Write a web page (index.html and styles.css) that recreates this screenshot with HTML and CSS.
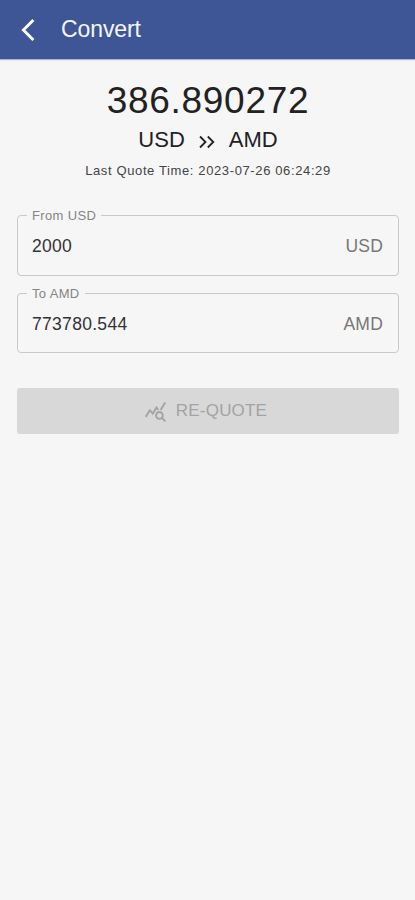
FILE: index.html
```html
<!DOCTYPE html>
<html lang="en">
<head>
  <meta charset="UTF-8" />
  <meta name="viewport" content="width=device-width, initial-scale=1.0" />
  <title>Convert</title>
  <link rel="stylesheet" href="styles.css">
</head>
<body>
  <header class="app-bar">
    <svg class="back" viewBox="0 0 14 24" aria-label="Back">
      <path d="M12.4 2 L2.4 12 L12.4 22" />
    </svg>
    <h1>Convert</h1>
  </header>

  <main class="container">
    <div class="quote">
      <div class="rate">386.890272</div>
      <div class="pair">
        <span>USD</span>
        <svg class="arrows" viewBox="0 0 16 14">
          <path d="M1 1.5 L6.5 7 L1 12.5 M8.8 1.5 L14.3 7 L8.8 12.5" />
        </svg>
        <span>AMD</span>
      </div>
      <div class="time">Last Quote Time: 2023-07-26 06:24:29</div>
    </div>

    <fieldset class="field">
      <legend>From USD</legend>
      <div class="field-row">
        <span class="value">2000</span>
        <span class="currency">USD</span>
      </div>
    </fieldset>

    <fieldset class="field">
      <legend>To AMD</legend>
      <div class="field-row">
        <span class="value">773780.544</span>
        <span class="currency">AMD</span>
      </div>
    </fieldset>

    <button class="requote" type="button" disabled>
      <svg viewBox="0 0 24 24">
        <path d="M19.88 18.47c.44-.7.7-1.51.7-2.39 0-2.49-2.01-4.5-4.5-4.5s-4.5 2.01-4.5 4.5 2.01 4.5 4.49 4.5c.88 0 1.7-.26 2.39-.7L21.58 23 23 21.58l-3.12-3.11zm-3.8.11c-1.38 0-2.5-1.12-2.5-2.5s1.12-2.5 2.5-2.5 2.5 1.12 2.5 2.5-1.12 2.5-2.5 2.5zm-.36-8.5c-.74.02-1.45.18-2.1.45l-.55-.83-3.8 6.18-3.01-3.52-3.63 5.81L1 17l5-8 3 3.5L13 6l2.72 4.08zm2.59.5c-.64-.28-1.33-.45-2.05-.49L21.38 2 23 3.18l-4.69 7.4z" />
      </svg>
      <span>RE-QUOTE</span>
    </button>
  </main>
</body>
</html>
```
FILE: styles.css
```css
* {
  box-sizing: border-box;
  margin: 0;
  padding: 0;
  font-family: "Liberation Sans", Arial, sans-serif;
}

body {
  min-height: 100vh;
  background: #f6f6f6;
  color: #222;
}

.app-bar {
  display: flex;
  align-items: center;
  height: 59px;
  padding-left: 21px;
  background: #3e5695;
  color: #f4f6fb;
  box-shadow: 0 1px 1px #aab3cd;
}

.back {
  width: 14px;
  height: 24px;
  margin-right: 26px;
  fill: none;
  stroke: #fff;
  stroke-width: 2.9;
}

h1 {
  font-size: 23px;
  font-weight: normal;
  letter-spacing: -0.1px;
}

.container {
  padding: 22px 16px 0 17px;
}

.quote {
  text-align: center;
}

.rate {
  font-size: 37px;
  line-height: 40px;
  letter-spacing: 0.7px;
}

.pair {
  display: flex;
  justify-content: center;
  align-items: center;
  gap: 14px;
  font-size: 22px;
  line-height: 38px;
}

.arrows {
  width: 16px;
  height: 14px;
  margin-top: 3px;
  fill: none;
  stroke: #222;
  stroke-width: 1.8;
}

.time {
  font-size: 13px;
  line-height: 24px;
  letter-spacing: 0.62px;
  color: #444;
}

.field {
  height: 68px;
  margin-top: 25px;
  padding: 0 15px 0 14px;
  border: 1px solid #c9c9c9;
  border-radius: 4px;
}

.field + .field {
  height: 67px;
  margin-top: 10px;
}

legend {
  margin-left: -5px;
  padding: 1px 5px 0;
  font-size: 13px;
  line-height: 14px;
  letter-spacing: 0.35px;
  color: #858585;
}

.field-row {
  display: flex;
  justify-content: space-between;
  align-items: center;
  height: 46px;
  font-size: 17.5px;
}

.value {
  letter-spacing: 0.3px;
  color: #333;
}

.currency {
  letter-spacing: 0.2px;
  color: #777;
}

.requote {
  display: flex;
  justify-content: center;
  align-items: center;
  gap: 9px;
  width: 100%;
  height: 46px;
  margin-top: 35px;
  padding-right: 5px;
  border: none;
  border-radius: 3px;
  background: #d8d8d8;
  color: #a3a3a3;
  font-size: 17px;
  letter-spacing: 0.2px;
}

.requote svg {
  width: 23px;
  height: 23px;
  fill: currentColor;
}
```
